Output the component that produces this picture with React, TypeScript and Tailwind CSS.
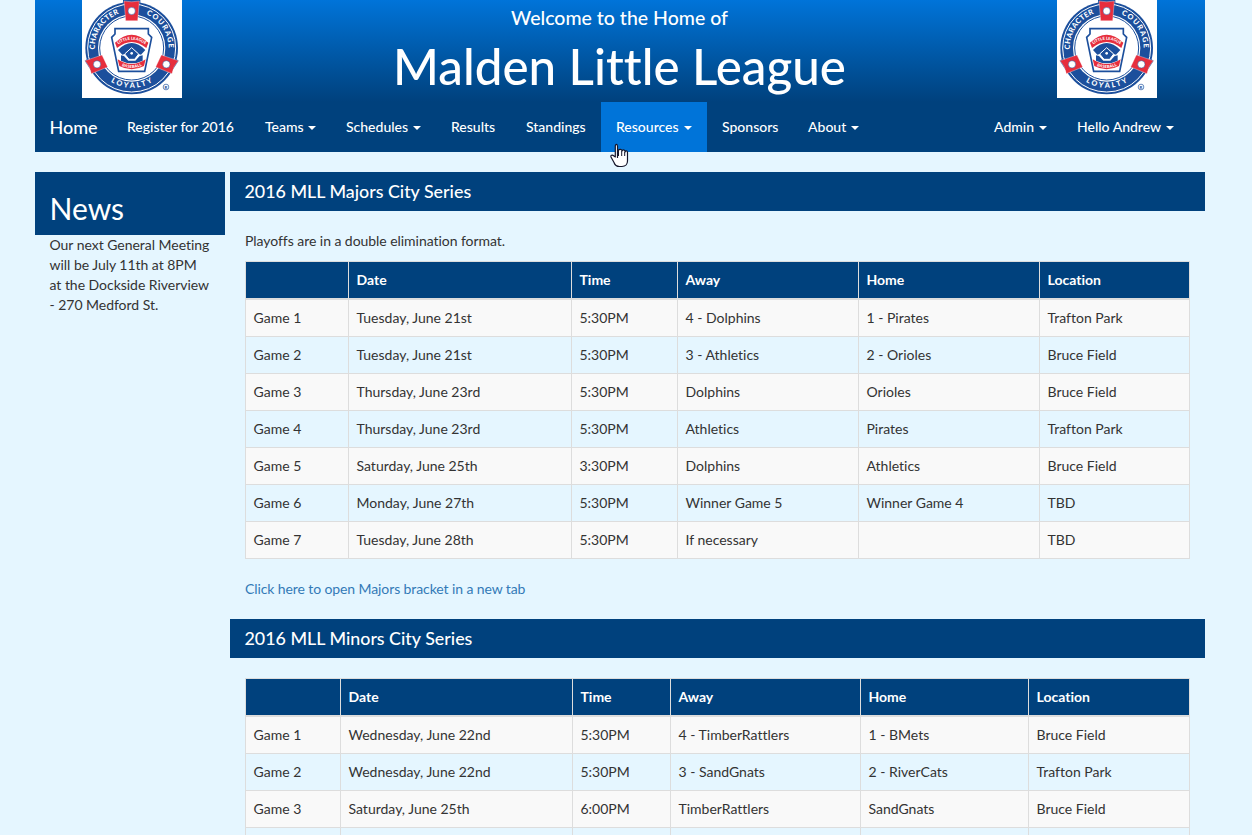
import React from "react";

function Logo() {
  return (
    <svg className="block h-[98px] w-[100px] shrink-0 bg-white" viewBox="6 0 300 294" aria-label="Little League Baseball">
      <defs>
        <path id="arc-left" d="M46.500 168 A111 111 0 0 1 136 36" />
        <path id="arc-right" d="M176 36 A111 111 0 0 1 263.500 168" />
        <path id="arc-bottom" d="M62 219 A120 120 0 0 0 248 219" />
        <path id="banner-top" d="M109 137 Q155 101 202 137" />
        <path id="banner-bottom" d="M118 194 Q155 214 193 194" />
      </defs>
      <g fill="#1c4f9c">
        <circle cx="155" cy="144" r="139" />
        <path d="M129 0H181V18H129ZM14 182L36 167L62 210L38 219ZM296 182L274 167L248 210L272 219Z" />
      </g>
      <circle cx="155" cy="144" r="132" fill="none" stroke="#fff" strokeWidth="3" />
      <circle cx="155" cy="144" r="101" fill="#fff" />
      <circle cx="155" cy="144" r="96" fill="none" stroke="#1c4f9c" strokeWidth="3" />
      <g fill="#e62e3d" stroke="#fff" strokeWidth="1">
        <path d="M132 3Q155 8 178 3L173 62H137Z" />
        <path d="M15 182Q31 200 34 221L83 201L66 165Z" />
        <path d="M295 182Q279 200 276 221L227 201L244 165Z" />
      </g>
      <g fill="#fff" stroke="#1c4f9c" strokeWidth="1.500">
        <circle cx="155" cy="33" r="11" />
        <circle cx="51" cy="193" r="11" />
        <circle cx="259" cy="193" r="11" />
      </g>
      <g fill="#fff" fontFamily="Lato, sans-serif" fontWeight="900" fontSize="22" textAnchor="middle">
        <text><textPath href="#arc-left" startOffset="50%" textLength="138">CHARACTER</textPath></text>
        <text><textPath href="#arc-right" startOffset="50%" textLength="128">COURAGE</textPath></text>
        <text><textPath href="#arc-bottom" startOffset="50%" textLength="132">LOYALTY</textPath></text>
      </g>
      <path d="M105 86H205V102L215 112L194 214H116L95 112L105 102Z" fill="#fff" stroke="#1c4f9c" strokeWidth="5" />
      <path d="M105 128Q155 80 205 128L199 144Q155 108 111 144Z" fill="#e62e3d" />
      <path d="M114 150Q155 108 196 150L183 164L176 162Q155 136 134 162L127 164Z" fill="#1c4f9c" />
      <path d="M123 166L132 168L145 182L166 182L179 168L188 166V182Q155 198 123 182Z" fill="#1c4f9c" />
      <path d="M155 143L176 162L164 178H147L134 162Z" fill="#1c4f9c" stroke="#fff" strokeWidth="3" />
      <circle cx="155" cy="160" r="4" fill="#fff" />
      <path d="M113 178Q155 206 197 178L192 198Q155 218 118 198Z" fill="#e62e3d" />
      <g fill="#fff" fontFamily="Lato, sans-serif" fontWeight="900" fontSize="12" textAnchor="middle">
        <text><textPath href="#banner-top" startOffset="50%" textLength="88">LITTLE LEAGUE</textPath></text>
        <text><textPath href="#banner-bottom" startOffset="50%" textLength="62">BASEBALL</textPath></text>
      </g>
      <circle cx="258" cy="261" r="8.500" fill="#fff" stroke="#1c4f9c" strokeWidth="2" />
      <text x="258" y="266" fill="#1c4f9c" fontFamily="Lato, sans-serif" fontWeight="900" fontSize="13" textAnchor="middle">R</text>
    </svg>
  );
}

function NavItem({ label, width, caret, active }: { label: string; width: number; caret?: boolean; active?: boolean }) {
  return (
    <a
      style={{ width }}
      className={
        active
          ? "flex h-[50px] items-center justify-between whitespace-nowrap bg-[#0074d9] px-[15px]"
          : "flex h-[50px] items-center justify-between whitespace-nowrap px-[15px]"
      }
    >
      {label}
      {caret && <span className="mt-[2px] border-x-4 border-t-4 border-x-transparent border-t-white" />}
    </a>
  );
}

function Bar({ children }: { children: React.ReactNode }) {
  return <h2 className="h-[39px] bg-[#00417d] pl-[14.500px] text-[17.850px] font-medium leading-[39px] text-white">{children}</h2>;
}

function Schedule({ widths, rows }: { widths: number[]; rows: string[][] }) {
  return (
    <table className="w-[945px] table-fixed border-collapse border border-[#ddd] text-left">
      <colgroup>
        {widths.map((w, i) => (
          <col key={i} style={{ width: w }} />
        ))}
      </colgroup>
      <thead>
        <tr className="bg-[#00417d] text-white">
          {["", "Date", "Time", "Away", "Home", "Location"].map((h) => (
            <th key={h} className="h-[37px] border border-b-2 border-[#ddd] py-2 pl-[7.500px] font-bold">{h}</th>
          ))}
        </tr>
      </thead>
      <tbody>
        {rows.map((r) => (
          <tr key={r[0]} className="odd:bg-[#f9f9f9]">
            {r.map((c, i) => (
              <td key={i} className="h-[37px] border border-[#ddd] py-2 pl-[7.500px]">{c}</td>
            ))}
          </tr>
        ))}
      </tbody>
    </table>
  );
}

const majors = [
  ["Game 1", "Tuesday, June 21st", "5:30PM", "4 - Dolphins", "1 - Pirates", "Trafton Park"],
  ["Game 2", "Tuesday, June 21st", "5:30PM", "3 - Athletics", "2 - Orioles", "Bruce Field"],
  ["Game 3", "Thursday, June 23rd", "5:30PM", "Dolphins", "Orioles", "Bruce Field"],
  ["Game 4", "Thursday, June 23rd", "5:30PM", "Athletics", "Pirates", "Trafton Park"],
  ["Game 5", "Saturday, June 25th", "3:30PM", "Dolphins", "Athletics", "Bruce Field"],
  ["Game 6", "Monday, June 27th", "5:30PM", "Winner Game 5", "Winner Game 4", "TBD"],
  ["Game 7", "Tuesday, June 28th", "5:30PM", "If necessary", "", "TBD"],
];

const minors = [
  ["Game 1", "Wednesday, June 22nd", "5:30PM", "4 - TimberRattlers", "1 - BMets", "Bruce Field"],
  ["Game 2", "Wednesday, June 22nd", "5:30PM", "3 - SandGnats", "2 - RiverCats", "Trafton Park"],
  ["Game 3", "Saturday, June 25th", "6:00PM", "TimberRattlers", "SandGnats", "Bruce Field"],
  ["", "", "", "", "", ""],
];

export default function App() {
  return (
    <div className="relative h-screen overflow-hidden bg-[#e5f6ff] font-['Lato',sans-serif] text-[14px] leading-5 text-[#333] [font-variant-ligatures:none]">
      <div className="ml-[35px] w-[1170px]">
        <header className="h-[152px] bg-[#00417d] bg-linear-to-b from-[#0074d9] from-0% to-[#00417d] to-[102px] text-white">
          <div className="flex h-[102px] justify-between pl-[47px] pr-12">
            <Logo />
            <div className="text-center">
              <p className="pt-2 text-[19.500px] font-medium leading-5">Welcome to the Home of</p>
              <h1 className="pt-2 text-[49.300px] font-medium leading-[60px]">Malden Little League</h1>
            </div>
            <Logo />
          </div>
          <nav className="flex h-[50px] pr-4 font-medium">
            <a className="flex h-[50px] w-[77px] items-center pl-[14.500px] text-[18px]">Home</a>
            <NavItem width={138} label="Register for 2016" />
            <NavItem width={81} label="Teams" caret />
            <NavItem width={105} label="Schedules" caret />
            <NavItem width={75} label="Results" />
            <NavItem width={90} label="Standings" />
            <NavItem width={106} label="Resources" caret active />
            <NavItem width={86} label="Sponsors" />
            <NavItem width={81} label="About" caret />
            <div className="ml-auto flex">
              <NavItem width={83} label="Admin" caret />
              <NavItem width={127} label="Hello Andrew" caret />
            </div>
          </nav>
        </header>
        <div className="mt-5 flex gap-[5px]">
          <aside className="w-[190px]">
            <h2 className="h-[63px] bg-[#00417d] px-[14.500px] pt-5 text-[30px] leading-[33px] text-white">News</h2>
            <p className="whitespace-nowrap pl-[14.500px] tracking-[-0.030px]">
              Our next General Meeting<br />will be July 11th at 8PM<br />at the Dockside Riverview<br />- 270 Medford St.
            </p>
          </aside>
          <main className="w-[975px]">
            <Bar>2016 MLL Majors City Series</Bar>
            <div className="px-[15px] pb-5 pt-5">
              <p className="mb-[10px] tracking-[-0.050px]">Playoffs are in a double elimination format.</p>
              <Schedule widths={[103, 223, 106, 181, 181, 150]} rows={majors} />
              <a className="mt-5 block tracking-[-0.100px] text-[#337ab7]">Click here to open Majors bracket in a new tab</a>
            </div>
            <Bar>2016 MLL Minors City Series</Bar>
            <div className="px-[15px] pt-5">
              <Schedule widths={[95, 232, 98, 190, 168, 161]} rows={minors} />
            </div>
          </main>
        </div>
      </div>
      <svg className="absolute left-[610px] top-[143px]" width="19" height="26" viewBox="0 0 19 26">
        <path d="M7.500 15V3.500C7.500 1 5.300 .7 5.300 3V14L4 13C2 11.300 .5 12.300 1 14L4 19.500C5 22.500 7 23.500 9.500 23.500H12C15.500 23.500 17.500 21 17.500 18V9.500C17.500 7.500 15.500 7.500 15 9V8C14.500 6.500 12.500 6.500 12 8V7.500C11.500 6 9.500 6 8.500 7L7.500 7.500" fill="#fff" stroke="#16162a" strokeWidth="1.200" strokeLinejoin="round" />
        <path d="M8.500 7V13M11.700 8V13M14.700 9V13" fill="none" stroke="#16162a" strokeWidth="1" />
      </svg>
    </div>
  );
}
